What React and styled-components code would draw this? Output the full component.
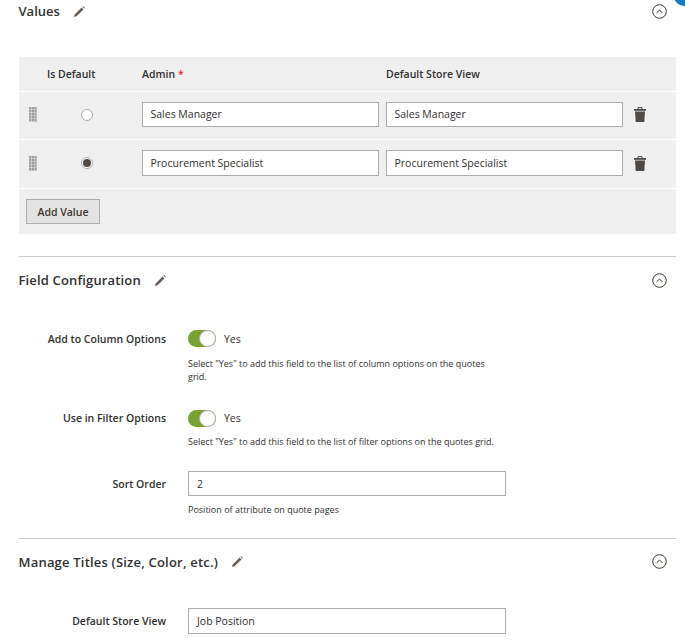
import React from "react";
import styled, { createGlobalStyle } from "styled-components";

const Global = createGlobalStyle`
  html, body { margin: 0; padding: 0; background: #fff; overflow: hidden; }
  body { font-family: "Open Sans", "DejaVu Sans", sans-serif; color: #303030; font-size: 11px; }
`;
const Page = styled.div`
  position: relative;
  width: 685px;
  height: 644px;
  overflow: hidden;
  padding: 0 9px 0 19px;
  box-sizing: border-box;
`;
const Corner = styled.div`
  position: absolute;
  top: -14px;
  right: -9px;
  width: 20px;
  height: 20px;
  border-radius: 50%;
  background: #1979c3;
`;
const Head = styled.div`
  display: flex;
  align-items: center;
  height: ${(p) => p.$h}px;
  margin-top: ${(p) => p.$mt || 0}px;
  padding-right: 9px;
`;
const Title = styled.h2`
  margin: 0 0 0 -0.5px;
  font-size: 13px;
  line-height: 18px;
  font-weight: 600;
  letter-spacing: ${(p) => p.$ls || 0}px;
  color: #303030;
`;
const Edit = styled.svg`
  width: 13px;
  height: 13px;
  margin-left: ${(p) => p.$ml}px;
  flex: none;
`;
const Collapse = styled.svg`
  width: 15px;
  height: 15px;
  margin-left: auto;
  flex: none;
`;
const Table = styled.div`
  margin-top: ${(p) => p.$mt}px;
  background: #efefef;
  width: 657px;
`;
const HeadRow = styled.div`
  display: grid;
  grid-template-columns: 123px 244px 1fr;
  height: 34px;
  align-items: center;
  font-size: 10.5px;
  font-weight: 600;
  border-bottom: 1px solid #fff;
`;
const DefaultHead = styled.span`
  padding-left: 28px;
`;
const Star = styled.span`
  color: #e22626;
  margin-left: 3px;
`;
const Row = styled.div`
  display: grid;
  grid-template-columns: 8px 115px 237px 7px 237px 1fr;
  height: ${(p) => p.$h}px;
  padding-bottom: 2px;
  align-items: center;
  border-bottom: 1px solid #fff;
`;
const Grip = styled.svg`
  width: 8px;
  height: 15px;
  margin-left: 10px;
`;
const Radio = styled.span`
  margin-left: 54px;
  width: 12px;
  height: 12px;
  border-radius: 50%;
  border: 1px solid #adadad;
  background: #fff;
  display: flex;
  align-items: center;
  justify-content: center;
  box-sizing: border-box;
  &::after {
    content: "";
    width: 8px;
    height: 8px;
    border-radius: 50%;
    background: ${(p) => (p.$on ? "#514943" : "transparent")};
  }
`;
const Input = styled.div`
  box-sizing: border-box;
  width: ${(p) => p.$w || 237}px;
  height: ${(p) => p.$h || 25}px;
  border: 1px solid #adadad;
  background: #fff;
  padding: ${(p) => p.$pt || 0}px ${(p) => p.$px || 7.5}px ${(p) => p.$pb || 0}px;
  display: flex;
  align-items: center;
  font-size: 10.5px;
  color: #303030;
`;
const Trash = styled.svg`
  width: 12px;
  height: 15px;
  margin-left: 11px;
`;
const Foot = styled.div`
  height: 45px;
  padding: 10px 0 0 7px;
  box-sizing: border-box;
`;
const Button = styled.button`
  box-sizing: border-box;
  width: 74px;
  height: 25px;
  border: 1px solid #adadad;
  background: #e3e3e3;
  color: #41362f;
  font: 600 10.5px "Open Sans", sans-serif;
  padding: 0;
`;
const Divider = styled.div`
  height: 1px;
  background: #ccc;
  width: 657px;
  margin-top: ${(p) => p.$mt}px;
`;
const Field = styled.div`
  display: grid;
  grid-template-columns: 147px 1fr;
  column-gap: 22px;
  margin-top: ${(p) => p.$mt}px;
`;
const Label = styled.div`
  text-align: right;
  font-size: 10.5px;
  font-weight: 600;
  line-height: ${(p) => p.$lh}px;
`;
const Control = styled.div`
  display: flex;
  align-items: flex-start;
  height: ${(p) => p.$h}px;
`;
const Switch = styled.span`
  width: 28px;
  height: 17px;
  border-radius: 9px;
  background: #79a22e;
  position: relative;
  flex: none;
  &::after {
    content: "";
    position: absolute;
    right: 0;
    top: 0;
    width: 17px;
    height: 17px;
    box-sizing: border-box;
    border-radius: 50%;
    background: #fff;
    border: 1px solid #adadad;
  }
`;
const YesText = styled.span`
  font-size: 10.5px;
  line-height: ${(p) => p.$lh}px;
  margin-left: 8px;
`;
const Note = styled.div`
  font-size: 9px;
  line-height: 12.5px;
  color: #303030;
  width: 310px;
  margin-top: ${(p) => p.$mt}px;
  grid-column: 2;
`;

const Pencil = ({ ml }) => (
  <Edit $ml={ml} viewBox="0 0 13 13">
    <path d="M1 12l.7-2.6 6.9-6.9 1.9 1.9-6.9 6.9z" fill="#6b6058" />
    <path d="M9.3 1.8l.9-.9 1.9 1.9-.9.9z" fill="#8a8178" />
  </Edit>
);
const Chevron = () => (
  <Collapse viewBox="0 0 15 15">
    <circle cx="7.5" cy="7.5" r="6.8" fill="none" stroke="#41362f" strokeWidth="1" />
    <path d="M4.6 8.9l2.9-2.9 2.9 2.9" fill="none" stroke="#41362f" strokeWidth="1" />
  </Collapse>
);
const GripIcon = () => (
  <Grip viewBox="0 0 8 15">
    {[0, 3, 6, 9, 12].map((y) =>
      [0, 2.7, 5.4].map((x) => <rect key={`${x}-${y}`} x={x} y={y} width="2.3" height="2.6" fill="#9e9e9e" />)
    )}
  </Grip>
);
const TrashIcon = () => (
  <Trash viewBox="0 0 12 15">
    <path d="M4 2V.6h4V2" fill="none" stroke="#514943" strokeWidth="1" />
    <path d="M0 2h12v1.8H0z" fill="#514943" />
    <path d="M1 4.6h10l-.7 10.4H1.7z" fill="#514943" />
  </Trash>
);

const rows = [
  { v: "Sales Manager", on: false, rowH: 45, inH: 25, pb: 1 },
  { v: "Procurement Specialist", on: true, rowH: 46, inH: 26, pb: 0 },
];

export default function App() {
  return (
    <Page>
      <Global />
      <Corner />
      <Head $h={22}>
        <Title>Values</Title>
        <Pencil ml={13} />
        <Chevron />
      </Head>
      <Table $mt={35}>
        <HeadRow>
          <DefaultHead>Is Default</DefaultHead>
          <span>Admin<Star>*</Star></span>
          <span>Default Store View</span>
        </HeadRow>
        {rows.map((r) => (
          <Row key={r.v} $h={r.rowH}>
            <GripIcon />
            <Radio $on={r.on} />
            <Input $h={r.inH} $pb={r.pb}>{r.v}</Input>
            <span />
            <Input $h={r.inH} $pb={r.pb}>{r.v}</Input>
            <TrashIcon />
          </Row>
        ))}
        <Foot><Button>Add Value</Button></Foot>
      </Table>
      <Divider $mt={22} />
      <Head $h={18} $mt={14}>
        <Title $ls={0.15}>Field Configuration</Title>
        <Pencil ml={13} />
        <Chevron />
      </Head>
      <Field $mt={41}>
        <Label $lh={19}>Add to Column Options</Label>
        <Control $h={19}><Switch /><YesText $lh={19}>Yes</YesText></Control>
        <Note $mt={9}>Select "Yes" to add this field to the list of column options on the quotes grid.</Note>
      </Field>
      <Field $mt={26.5}>
        <Label $lh={17}>Use in Filter Options</Label>
        <Control $h={17}><Switch /><YesText $lh={17}>Yes</YesText></Control>
        <Note $mt={9}>Select "Yes" to add this field to the list of filter options on the quotes grid.</Note>
      </Field>
      <Field $mt={23}>
        <Label $lh={27}>Sort Order</Label>
        <Control $h={27}><Input $w={318} $px={8} $pt={1}>2</Input></Control>
        <Note $mt={5.5}>Position of attribute on quote pages</Note>
      </Field>
      <Divider $mt={21.5} />
      <Head $h={18} $mt={14}>
        <Title $ls={0.2}>Manage Titles (Size, Color, etc.)</Title>
        <Pencil ml={13} />
        <Chevron />
      </Head>
      <Field $mt={37}>
        <Label $lh={26}>Default Store View</Label>
        <Control $h={26}><Input $w={318} $h={26} $px={8}>Job Position</Input></Control>
      </Field>
    </Page>
  );
}
